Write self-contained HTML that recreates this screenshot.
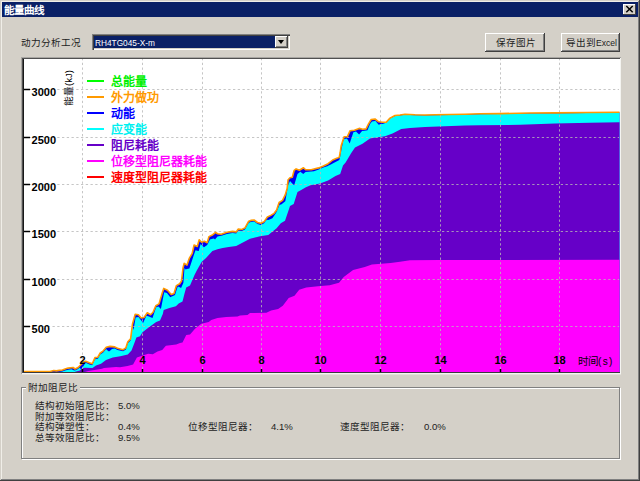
<!DOCTYPE html>
<html lang="zh-CN"><head><meta charset="utf-8">
<style>
html,body{margin:0;padding:0;}
body{width:640px;height:481px;position:relative;overflow:hidden;background:#d4d0c8;font-family:"Liberation Sans",sans-serif;}
.a{position:absolute;}
.xl{position:absolute;top:353.8px;width:20px;margin-left:-10px;text-align:center;font-size:11px;font-weight:bold;color:#000;line-height:12px;}
.yl{position:absolute;left:31.6px;font-size:11px;font-weight:bold;color:#000;line-height:10px;}
.lg{position:absolute;left:111px;font-size:12px;font-weight:bold;line-height:12px;margin-top:0.8px;white-space:nowrap;}
.ll{position:absolute;left:87px;width:17px;height:2px;}
.t9{position:absolute;font-size:9.6px;line-height:11px;color:#222;white-space:nowrap;}
</style></head><body>
<div class="a" style="left:0;top:0;width:640px;height:1px;background:#d4d0c8"></div>
<div class="a" style="left:1px;top:1px;width:638px;height:1px;background:#f0eee8"></div>
<div class="a" style="left:1px;top:1px;width:1px;height:478px;background:#f0eee8"></div>
<div class="a" style="left:638px;top:1px;width:1px;height:479px;background:#808080"></div>
<div class="a" style="left:639px;top:0;width:1px;height:481px;background:#404040"></div>
<div class="a" style="left:1px;top:479px;width:638px;height:1px;background:#808080"></div>
<div class="a" style="left:0;top:480px;width:640px;height:1px;background:#404040"></div>
<!-- title bar -->
<div class="a" style="left:2px;top:2px;width:636px;height:15px;background:#0a2066"></div>
<div class="a" style="left:4px;top:3.8px;font-size:10.5px;font-weight:bold;color:#fff;line-height:13px;">能量曲线</div>
<div class="a" style="left:623px;top:4px;width:13px;height:11px;background:#d4d0c8;box-shadow:inset -1px -1px #404040, inset 1px 1px #fff;"></div>
<svg class="a" style="left:623px;top:4px" width="13" height="11"><path d="M3.3,2 L9.7,8.3 M9.7,2 L3.3,8.3" stroke="#000" stroke-width="1.5"/></svg>
<svg width="640" height="481" style="position:absolute;left:0;top:0">
<rect x="24" y="59" width="596" height="313" fill="#fff"/>
<path d="M23.00,373.00 L23.00,371.60 L50.00,371.60 L53.75,370.50 L56.25,370.90 L59.40,370.40 L62.50,370.00 L65.00,369.00 L68.10,368.10 L73.10,367.50 L75.00,369.00 L78.10,367.50 L80.60,365.00 L83.10,361.90 L85.60,361.25 L89.40,362.80 L92.20,363.75 L95.00,357.60 L97.80,357.20 L100.20,353.00 L103.00,351.10 L106.20,347.30 L110.00,346.40 L114.70,346.90 L117.50,348.30 L123.10,349.70 L125.90,347.80 L127.80,341.70 L130.60,338.90 L131.50,331.90 L132.50,324.00 L135.20,314.20 L138.40,314.70 L141.20,318.00 L144.00,317.50 L147.30,312.80 L150.60,314.70 L153.00,312.30 L155.80,305.80 L159.00,303.90 L161.90,294.00 L163.70,288.40 L167.50,290.30 L171.20,294.50 L174.00,293.60 L176.40,285.60 L179.70,283.75 L181.50,281.00 L183.00,268.00 L184.20,263.30 L187.00,265.10 L189.40,258.10 L192.20,253.40 L194.10,245.00 L197.30,246.40 L199.20,239.80 L201.60,242.20 L204.40,241.20 L207.20,242.70 L209.00,236.60 L212.80,234.70 L215.60,232.30 L217.50,233.75 L221.20,234.20 L226.90,232.30 L232.50,231.40 L236.20,231.90 L238.30,229.10 L241.70,229.50 L245.00,227.90 L248.70,221.20 L250.80,220.40 L254.10,220.00 L257.50,222.50 L260.80,223.30 L264.10,221.60 L267.40,217.00 L270.80,215.40 L274.10,213.30 L276.60,210.00 L279.10,202.50 L282.50,200.30 L285.30,194.70 L287.20,188.10 L288.10,179.70 L290.00,177.80 L292.30,177.30 L294.20,170.30 L296.10,168.90 L299.40,170.30 L303.50,167.70 L305.60,169.80 L311.20,169.80 L318.70,167.90 L323.40,166.00 L328.10,163.70 L332.70,160.00 L337.40,158.10 L339.30,157.20 L340.20,152.50 L341.20,145.70 L344.10,136.80 L347.30,136.80 L350.10,130.70 L354.40,130.30 L359.10,128.40 L362.80,129.30 L366.10,128.90 L368.40,124.20 L371.20,119.50 L375.00,119.00 L378.70,121.80 L382.50,122.30 L386.20,122.30 L390.00,118.10 L395.00,115.50 L400.00,115.00 L405.00,114.30 L415.00,114.80 L425.00,115.00 L435.00,114.80 L450.00,114.50 L465.00,114.20 L480.00,113.80 L500.00,113.60 L530.00,113.00 L555.00,112.90 L587.50,112.50 L619.50,112.30 L619.50,373.00 Z" fill="#0000f0"/>
<path d="M23.00,373.00 L23.00,372.50 L50.00,372.34 L53.75,372.10 L56.25,372.30 L59.40,372.00 L62.50,371.60 L65.00,370.60 L68.10,369.70 L71.50,369.29 L73.10,370.00 L73.50,370.30 L75.00,370.60 L75.50,370.36 L78.10,369.10 L79.50,367.70 L80.60,368.83 L81.00,369.50 L83.10,366.56 L83.50,366.00 L85.00,363.50 L85.60,362.85 L89.40,364.40 L92.20,365.35 L95.00,359.20 L97.80,358.80 L100.20,354.60 L103.00,352.70 L106.20,348.90 L107.00,350.00 L109.00,351.60 L110.00,350.73 L112.00,349.00 L114.70,348.50 L117.50,349.90 L123.10,351.30 L125.90,349.40 L127.80,343.30 L130.60,340.50 L131.50,333.50 L132.50,325.60 L133.50,330.00 L135.20,319.88 L135.60,317.50 L138.40,317.02 L138.50,317.00 L141.20,320.58 L143.10,323.10 L144.00,321.05 L146.40,315.68 L147.30,315.91 L149.00,316.50 L150.60,317.19 L152.50,318.00 L153.00,316.54 L155.80,308.37 L156.20,307.20 L158.50,306.50 L159.00,307.02 L160.90,309.00 L161.90,303.91 L163.70,294.75 L164.20,292.20 L167.00,293.00 L167.50,293.65 L170.30,297.30 L171.20,296.86 L174.00,295.49 L175.00,295.00 L176.40,290.55 L177.80,286.42 L179.70,287.19 L181.10,288.00 L181.50,287.10 L183.00,283.70 L183.40,282.80 L184.20,272.04 L184.50,268.00 L185.60,269.40 L187.00,269.03 L189.40,268.40 L192.20,259.92 L193.10,257.20 L194.10,254.28 L195.50,250.20 L197.30,250.71 L198.70,251.10 L199.20,249.26 L200.60,244.10 L201.60,245.07 L203.90,247.30 L204.40,246.95 L207.20,245.00 L209.00,241.40 L210.00,239.40 L212.80,238.64 L213.70,238.40 L215.10,239.40 L215.60,238.82 L217.50,236.60 L221.20,235.80 L222.20,235.47 L226.90,233.90 L232.50,233.00 L236.20,233.50 L238.30,230.70 L241.70,231.10 L245.00,229.50 L248.70,222.80 L250.80,222.00 L254.10,221.60 L257.50,224.10 L260.80,224.90 L264.10,223.20 L266.00,220.55 L267.40,219.80 L268.30,220.00 L270.80,218.96 L272.40,218.30 L274.10,215.80 L276.00,213.00 L276.60,211.63 L279.10,205.91 L279.50,205.00 L281.60,204.20 L282.50,203.47 L285.30,201.20 L287.20,190.41 L288.10,185.30 L290.00,181.10 L292.30,183.40 L294.20,185.30 L296.10,178.85 L297.50,174.10 L299.40,172.47 L300.30,171.70 L303.30,174.00 L303.50,173.83 L305.60,172.10 L311.20,171.50 L314.00,171.20 L318.70,169.50 L323.40,167.60 L328.00,165.90 L328.10,165.86 L330.90,164.60 L332.70,163.61 L337.40,161.04 L339.30,160.00 L340.20,156.40 L340.30,156.00 L341.20,150.89 L343.10,141.47 L344.10,139.25 L346.40,138.40 L347.30,138.96 L349.70,143.40 L350.10,142.19 L353.40,132.20 L354.40,131.93 L356.00,131.50 L359.10,134.50 L362.30,130.78 L362.80,130.90 L366.10,130.50 L367.50,130.30 L368.40,128.03 L370.00,124.00 L371.20,122.50 L372.00,121.50 L375.00,121.07 L375.50,121.00 L378.70,124.70 L381.50,123.77 L382.50,123.90 L386.20,122.80 L390.00,118.60 L395.00,116.00 L400.00,115.50 L405.00,114.80 L415.00,115.30 L425.00,115.50 L435.00,115.30 L450.00,115.00 L465.00,114.70 L480.00,114.30 L500.00,114.10 L530.00,113.50 L555.00,113.40 L587.50,113.00 L619.50,112.80 L619.50,373.00 Z" fill="#00ffff"/>
<path d="M23.00,373.00 L23.00,372.50 L74.00,372.20 L76.00,371.40 L80.00,370.60 L82.00,368.60 L84.70,367.80 L92.50,368.00 L96.00,365.60 L101.00,363.75 L106.00,360.00 L112.80,357.40 L120.30,356.20 L127.80,354.40 L131.50,350.60 L134.40,343.10 L136.40,337.50 L140.00,336.30 L142.50,332.20 L148.30,327.80 L154.10,323.50 L156.20,322.00 L160.00,320.60 L162.80,314.00 L163.70,310.00 L169.40,308.10 L175.90,306.20 L178.70,303.40 L182.50,301.60 L184.40,294.00 L186.20,287.50 L190.00,285.60 L194.50,275.00 L196.90,270.30 L201.60,261.90 L206.00,258.00 L212.40,251.00 L217.50,249.20 L222.70,247.90 L228.70,246.90 L236.20,245.90 L240.00,244.10 L250.00,238.75 L260.00,236.25 L268.30,235.00 L276.60,228.30 L280.80,223.30 L285.00,220.80 L288.00,212.00 L290.00,206.00 L293.70,204.00 L297.50,191.90 L301.20,190.00 L305.90,187.20 L310.60,185.30 L320.00,183.40 L328.10,180.50 L335.50,175.90 L340.20,174.00 L343.00,165.60 L345.60,162.50 L351.25,153.00 L355.00,147.50 L362.50,143.75 L370.00,138.50 L376.00,137.50 L385.00,136.25 L392.50,133.40 L401.25,129.00 L410.00,128.00 L425.00,127.00 L445.00,126.30 L465.00,125.60 L480.00,125.20 L520.00,124.80 L555.00,123.60 L590.00,122.80 L619.50,122.20 L619.50,373.00 Z" fill="#6600c8"/>
<path d="M84.00,373.00 L84.00,372.20 L88.25,371.00 L94.50,370.00 L102.00,368.75 L104.00,368.00 L116.00,367.00 L120.00,367.30 L127.50,366.00 L133.10,364.50 L136.90,357.50 L144.40,355.10 L148.10,353.75 L152.80,354.20 L157.50,351.40 L162.20,350.00 L165.90,345.80 L176.20,344.40 L180.00,343.00 L182.50,342.50 L186.25,335.00 L190.00,334.40 L195.00,328.75 L201.25,323.75 L208.75,321.90 L211.25,320.00 L217.50,318.10 L226.25,316.90 L237.50,316.50 L240.00,315.60 L247.50,315.00 L250.00,313.10 L266.40,312.80 L271.10,310.50 L278.10,309.10 L282.80,305.80 L288.70,298.00 L294.50,295.70 L299.20,289.80 L306.25,287.50 L318.00,286.30 L329.70,285.20 L339.00,282.80 L343.75,277.00 L353.10,270.00 L364.80,266.90 L371.90,264.50 L390.60,262.90 L400.00,261.70 L410.00,260.30 L440.00,260.00 L619.50,259.70 L619.50,373.00 Z" fill="#ff00ff"/>
<g stroke="#b8b8b8" stroke-opacity="0.8" stroke-width="1" stroke-dasharray="2.3 2.45"><line x1="82.5" y1="58" x2="82.5" y2="372" /><line x1="142.5" y1="58" x2="142.5" y2="372" /><line x1="202.5" y1="58" x2="202.5" y2="372" /><line x1="261.5" y1="58" x2="261.5" y2="372" /><line x1="320.5" y1="58" x2="320.5" y2="372" /><line x1="380.5" y1="58" x2="380.5" y2="372" /><line x1="440.5" y1="58" x2="440.5" y2="372" /><line x1="500.5" y1="58" x2="500.5" y2="372" /><line x1="559.5" y1="58" x2="559.5" y2="372" /><line x1="24" y1="326.5" x2="619" y2="326.5" /><line x1="24" y1="279.5" x2="619" y2="279.5" /><line x1="24" y1="231.5" x2="619" y2="231.5" /><line x1="24" y1="184.5" x2="619" y2="184.5" /><line x1="24" y1="137.5" x2="619" y2="137.5" /><line x1="24" y1="89.5" x2="619" y2="89.5" /></g>
<path d="M23.00,371.60 L50.00,371.60 L53.75,370.50 L56.25,370.90 L59.40,370.40 L62.50,370.00 L65.00,369.00 L68.10,368.10 L73.10,367.50 L75.00,369.00 L78.10,367.50 L80.60,365.00 L83.10,361.90 L85.60,361.25 L89.40,362.80 L92.20,363.75 L95.00,357.60 L97.80,357.20 L100.20,353.00 L103.00,351.10 L106.20,347.30 L110.00,346.40 L114.70,346.90 L117.50,348.30 L123.10,349.70 L125.90,347.80 L127.80,341.70 L130.60,338.90 L131.50,331.90 L132.50,324.00 L135.20,314.20 L138.40,314.70 L141.20,318.00 L144.00,317.50 L147.30,312.80 L150.60,314.70 L153.00,312.30 L155.80,305.80 L159.00,303.90 L161.90,294.00 L163.70,288.40 L167.50,290.30 L171.20,294.50 L174.00,293.60 L176.40,285.60 L179.70,283.75 L181.50,281.00 L183.00,268.00 L184.20,263.30 L187.00,265.10 L189.40,258.10 L192.20,253.40 L194.10,245.00 L197.30,246.40 L199.20,239.80 L201.60,242.20 L204.40,241.20 L207.20,242.70 L209.00,236.60 L212.80,234.70 L215.60,232.30 L217.50,233.75 L221.20,234.20 L226.90,232.30 L232.50,231.40 L236.20,231.90 L238.30,229.10 L241.70,229.50 L245.00,227.90 L248.70,221.20 L250.80,220.40 L254.10,220.00 L257.50,222.50 L260.80,223.30 L264.10,221.60 L267.40,217.00 L270.80,215.40 L274.10,213.30 L276.60,210.00 L279.10,202.50 L282.50,200.30 L285.30,194.70 L287.20,188.10 L288.10,179.70 L290.00,177.80 L292.30,177.30 L294.20,170.30 L296.10,168.90 L299.40,170.30 L303.50,167.70 L305.60,169.80 L311.20,169.80 L318.70,167.90 L323.40,166.00 L328.10,163.70 L332.70,160.00 L337.40,158.10 L339.30,157.20 L340.20,152.50 L341.20,145.70 L344.10,136.80 L347.30,136.80 L350.10,130.70 L354.40,130.30 L359.10,128.40 L362.80,129.30 L366.10,128.90 L368.40,124.20 L371.20,119.50 L375.00,119.00 L378.70,121.80 L382.50,122.30 L386.20,122.30 L390.00,118.10 L395.00,115.50 L400.00,115.00 L405.00,114.30 L415.00,114.80 L425.00,115.00 L435.00,114.80 L450.00,114.50 L465.00,114.20 L480.00,113.80 L500.00,113.60 L530.00,113.00 L555.00,112.90 L587.50,112.50 L619.50,112.30" fill="none" stroke="#ff9a00" stroke-width="1.6" stroke-linejoin="round"/>
<g stroke="#000" stroke-width="1.5"><line x1="82.5" y1="369" x2="82.5" y2="372.5" /><line x1="142.5" y1="369" x2="142.5" y2="372.5" /><line x1="202.5" y1="369" x2="202.5" y2="372.5" /><line x1="261.5" y1="369" x2="261.5" y2="372.5" /><line x1="320.5" y1="369" x2="320.5" y2="372.5" /><line x1="380.5" y1="369" x2="380.5" y2="372.5" /><line x1="440.5" y1="369" x2="440.5" y2="372.5" /><line x1="500.5" y1="369" x2="500.5" y2="372.5" /><line x1="559.5" y1="369" x2="559.5" y2="372.5" /><line x1="23" y1="326.5" x2="30" y2="326.5" /><line x1="23" y1="279.5" x2="30" y2="279.5" /><line x1="23" y1="231.5" x2="30" y2="231.5" /><line x1="23" y1="184.5" x2="30" y2="184.5" /><line x1="23" y1="137.5" x2="30" y2="137.5" /><line x1="23" y1="89.5" x2="30" y2="89.5" /></g>
</svg>
<!-- plot frame -->
<div class="a" style="left:21px;top:57px;width:600px;height:1px;background:#a8a6a2"></div>
<div class="a" style="left:22px;top:58px;width:598px;height:1px;background:#505050"></div>
<div class="a" style="left:21px;top:57px;width:1px;height:317px;background:#a8a6a2"></div>
<div class="a" style="left:22px;top:58px;width:1px;height:315px;background:#505050"></div>
<div class="a" style="left:23px;top:59px;width:1px;height:314px;background:#181818"></div>
<div class="a" style="left:23px;top:372px;width:597px;height:1px;background:#3a3a3e"></div>
<div class="a" style="left:620px;top:58px;width:1px;height:316px;background:#f4f4f0"></div>
<div class="a" style="left:22px;top:373px;width:599px;height:1px;background:#f4f4f0"></div>
<div class="a" style="left:22px;top:374px;width:599px;height:1px;background:#e2e0da"></div>
<div class="xl" style="left:82.5px">2</div><div class="xl" style="left:142.5px">4</div><div class="xl" style="left:202.5px">6</div><div class="xl" style="left:261.5px">8</div><div class="xl" style="left:320.5px">10</div><div class="xl" style="left:380.5px">12</div><div class="xl" style="left:440.5px">14</div><div class="xl" style="left:500.5px">16</div><div class="xl" style="left:559.5px">18</div><div class="yl" style="top:324.4px">500</div><div class="yl" style="top:277.4px">1000</div><div class="yl" style="top:229.4px">1500</div><div class="yl" style="top:182.4px">2000</div><div class="yl" style="top:135.4px">2500</div><div class="yl" style="top:87.4px">3000</div>
<div class="a" style="left:578px;top:355px;font-size:10.5px;line-height:12px;color:#000;">时间<span style="letter-spacing:1.3px;font-size:10px">(s)</span></div>
<div class="a" style="left:52px;top:83px;transform:rotate(-90deg);transform-origin:0 0;width:0;"><div style="position:absolute;left:-23px;top:11px;width:40px;font-size:9.6px;line-height:11px;white-space:nowrap;color:#000">能量(kJ)</div></div>
<div class="ll" style="top:80px;background:#00ff00"></div><div class="lg" style="top:75px;color:#00f000">总能量</div>
<div class="ll" style="top:96px;background:#ff9a00"></div><div class="lg" style="top:91px;color:#ff9a00">外力做功</div>
<div class="ll" style="top:112px;background:#0000ff"></div><div class="lg" style="top:107px;color:#0000ff">动能</div>
<div class="ll" style="top:128px;background:#00ffff"></div><div class="lg" style="top:123px;color:#00f0f0">应变能</div>
<div class="ll" style="top:144px;background:#6600c8"></div><div class="lg" style="top:139px;color:#6600c8">阻尼耗能</div>
<div class="ll" style="top:160px;background:#ff00ff"></div><div class="lg" style="top:155px;color:#ff00ff">位移型阻尼器耗能</div>
<div class="ll" style="top:176px;background:#ff0000"></div><div class="lg" style="top:171px;color:#ff0000">速度型阻尼器耗能</div>
<!-- top controls -->
<div class="t9" style="left:21px;top:37px;">动力分析工况</div>
<div class="a" style="left:92px;top:34px;width:198px;height:16px;background:#fff;box-shadow:inset 1px 1px #808080, inset 2px 2px #404040, inset -1px -1px #fff, inset -2px -2px #d4d0c8;"></div>
<div class="a" style="left:94px;top:36px;width:181px;height:12px;background:#0a2066;"></div>
<div class="t9" style="left:95px;top:37.5px;color:#fff;font-size:8.3px">RH4TG045-X-m</div>
<div class="a" style="left:275px;top:36px;width:13px;height:12px;background:#d4d0c8;box-shadow:inset -1px -1px #404040, inset 1px 1px #fff, inset -2px -2px #808080;"></div>
<div class="a" style="left:278px;top:40px;width:0;height:0;border-left:3.5px solid transparent;border-right:3.5px solid transparent;border-top:4px solid #000;"></div>
<div class="a" style="left:485px;top:33px;width:60px;height:19px;background:#d4d0c8;box-shadow:inset -1px -1px #404040, inset 1px 1px #fff, inset -2px -2px #808080;"></div>
<div class="t9" style="left:496px;top:37px;">保存图片</div>
<div class="a" style="left:561px;top:33px;width:59px;height:19px;background:#d4d0c8;box-shadow:inset -1px -1px #404040, inset 1px 1px #fff, inset -2px -2px #808080;"></div>
<div class="t9" style="left:566px;top:37px;">导出到<span style="font-size:8.6px">Excel</span></div>
<!-- group box -->
<div class="a" style="left:21px;top:387px;width:597px;height:70px;border:1px solid #808080;box-shadow:inset 1px 1px #fff, 1px 1px #fff;"></div>
<div class="t9" style="left:26px;top:382px;background:#d4d0c8;padding:0 2px;">附加阻尼比</div>
<div class="t9" style="left:35px;top:400px;">结构初始阻尼比：</div>
<div class="t9" style="left:118px;top:400px;">5.0%</div>
<div class="t9" style="left:35px;top:410.5px;">附加等效阻尼比：</div>
<div class="t9" style="left:35px;top:421px;">结构弹塑性：</div>
<div class="t9" style="left:118px;top:421px;">0.4%</div>
<div class="t9" style="left:35px;top:431.5px;">总等效阻尼比：</div>
<div class="t9" style="left:118px;top:431.5px;">9.5%</div>
<div class="t9" style="left:188px;top:421px;">位移型阻尼器：</div>
<div class="t9" style="left:271px;top:421px;">4.1%</div>
<div class="t9" style="left:340px;top:421px;">速度型阻尼器：</div>
<div class="t9" style="left:424px;top:421px;">0.0%</div>
</body></html>
